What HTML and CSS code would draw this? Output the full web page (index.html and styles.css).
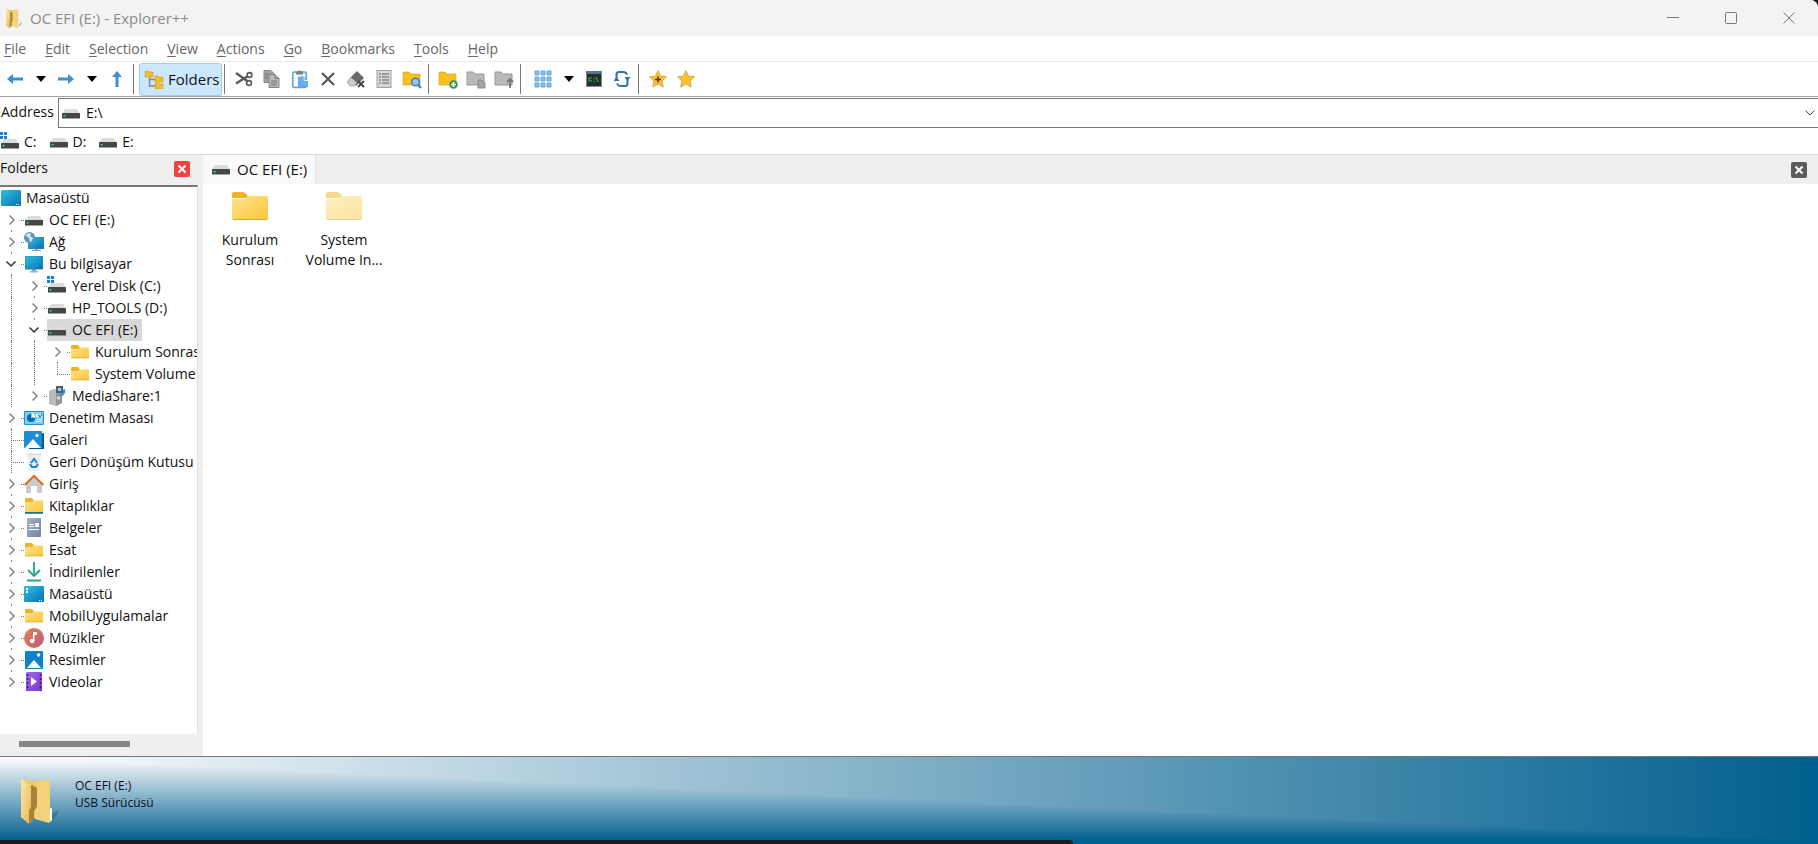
FILE: index.html
```
<!DOCTYPE html>
<html lang="tr">
<head>
<meta charset="utf-8">
<title>OC EFI (E:) - Explorer++</title>
<link rel="stylesheet" href="styles.css">
</head>
<body>
<svg class="defs" aria-hidden="true">
  <defs>
    <linearGradient id="gBlue" x1="0" y1="0" x2="1" y2="1"><stop offset="0" stop-color="#2fc0e0"/><stop offset="1" stop-color="#0672b8"/></linearGradient>
    <linearGradient id="gFolder" x1="0" y1="0" x2="1" y2="1"><stop offset="0" stop-color="#ffe38a"/><stop offset="1" stop-color="#fbc63a"/></linearGradient>
    <linearGradient id="gMusic" x1="0" y1="0" x2="1" y2="1"><stop offset="0" stop-color="#ea7f52"/><stop offset="1" stop-color="#b85a86"/></linearGradient>
    <linearGradient id="gVideo" x1="0" y1="0" x2="1" y2="1"><stop offset="0" stop-color="#a56be8"/><stop offset="1" stop-color="#7a35c8"/></linearGradient>
    <linearGradient id="gDoc" x1="0" y1="0" x2="1" y2="1"><stop offset="0" stop-color="#a3b4cc"/><stop offset="1" stop-color="#6d82a4"/></linearGradient>
    <linearGradient id="gOld" x1="0" y1="0" x2="1" y2="1"><stop offset="0" stop-color="#ffeaa8"/><stop offset="1" stop-color="#e3b754"/></linearGradient>
  </defs>
  <symbol id="drive" viewBox="0 0 20 20"><path d="M4 6h12l2.500 4h-17z" fill="#dcdcdc"/><rect x="1" y="10" width="18" height="5.500" rx=".6" fill="#434746"/><rect x="2.500" y="12" width="2" height="1.500" fill="#3fe07a"/></symbol>
  <symbol id="windrive" viewBox="0 0 20 20"><path d="M4 7h12l2.500 4h-17z" fill="#dcdcdc"/><rect x="1" y="11" width="18" height="5.500" rx=".6" fill="#434746"/><rect x="2.500" y="13" width="2" height="1.500" fill="#3fe07a"/><path d="M0 0h3v3H0zM4 0h3v3H4zM0 4h3v3H0zM4 4h3v3H4z" fill="#1583cf"/></symbol>
  <symbol id="folder" viewBox="0 0 20 20"><path d="M1 4q0-1 1-1h6l2 2.500v2H1z" fill="#eab32c"/><path d="M1 7h7l2-1.500h8q1 0 1 1V16H1z" fill="url(#gFolder)"/><path d="M1 15.500h18v.8H1z" fill="#d9a431"/></symbol>
  <symbol id="library" viewBox="0 0 20 20"><path d="M1 3q0-1 1-1h6l2 2.500v2H1z" fill="#eab32c"/><path d="M1 6h7l2-1.500h8q1 0 1 1V16H1z" fill="url(#gFolder)"/><path d="M1 16h18v1.800H1z" fill="#18768f"/></symbol>
  <symbol id="desktop" viewBox="0 0 20 20"><rect x="0" y="2" width="20" height="16" rx="1" fill="url(#gBlue)"/><path d="M15 16h1v1h-1zM17 16h1v1h-1z" fill="#fff"/></symbol>
  <symbol id="desktop2" viewBox="0 0 20 20"><rect x="0" y="2" width="20" height="16" rx="1" fill="url(#gBlue)"/><path d="M2 4h2v2H2zM2 7h2v2H2zM15 16h1v1h-1zM17 16h1v1h-1z" fill="#fff"/></symbol>
  <symbol id="pc" viewBox="0 0 20 20"><path d="M8 15h4v2H8z" fill="#8fa6b5"/><path d="M6 17h8v1.500H6z" fill="#9fb1bd"/><rect x="1" y="2" width="18" height="13.500" rx=".6" fill="#2f86ad"/><rect x="1.500" y="2.500" width="17" height="12.500" fill="url(#gBlue)"/></symbol>
  <symbol id="network" viewBox="0 0 20 20"><path d="M11 16h3v2h-3z" fill="#8fa6b5"/><path d="M8 18h9v1H8z" fill="#8199a8"/><rect x="4" y="5" width="16" height="12" fill="#2f86ad"/><rect x="4.500" y="5.500" width="15" height="11" fill="url(#gBlue)"/><circle cx="5.500" cy="5.500" r="5.500" fill="#5d97bd"/><path d="M1 3q4-3 6-1l-1 2 3 2-2 4q-2-1-2-4z" fill="#d5e8f0"/></symbol>
  <symbol id="media" viewBox="0 0 20 20"><path d="M2 5l5-2 7 1v13l-5 3-7-2z" fill="#b7b9bb"/><path d="M9 6l6-2v13l-6 3z" fill="#94979a"/><circle cx="11.500" cy="12" r="1.800" fill="#d2d4d5"/><path d="M9 0h7v7H9z" fill="#47616f"/><path d="M11 2h3v3h-3z" fill="#a8d1df"/><path d="M13 9.500q5-1 4-6" stroke="#2b8dd0" stroke-width="2" fill="none"/></symbol>
  <symbol id="control" viewBox="0 0 20 20"><rect x="0" y="3" width="20" height="14" rx="1" fill="#2792c7"/><rect x="1" y="4" width="18" height="12" fill="#7dcdf0"/><path d="M7 6a4 4 0 1 0 4 4H7z" fill="#0e67a8"/><path d="M8 5a4 4 0 0 1 3 4H8z" fill="#fff"/><path d="M12 6h3v3h-3zM16 6h2v3h-2zM13 11h5v1h-5zM12 13h5v1h-5z" fill="#e9f8ff"/><path d="M14 7l2 2 2-3" stroke="#17629a" fill="none"/></symbol>
  <symbol id="gallery" viewBox="0 0 20 20"><path d="M4 3h15q1 0 1 1v15H5z" fill="#075aa1"/><rect x="0" y="1" width="18" height="17" rx="1" fill="#198ed6"/><circle cx="13" cy="5.500" r="1.700" fill="#fff"/><path d="M1 18l8-9 8 9z" fill="#fff"/></symbol>
  <symbol id="bin" viewBox="0 0 20 20"><path d="M3 3h14l-2 16H5z" fill="#e8eff3"/><path d="M3 2l4-1 5 1 5-1v2H3z" fill="#dbe2e6"/><path d="M7 11l3-4 3 4M14 12l-2 3H8l-2-3" fill="none" stroke="#1e84d0" stroke-width="2"/></symbol>
  <symbol id="home" viewBox="0 0 20 20"><path d="M2 9l8-7 8 7v9q0 1-1 1h-4v-7H7v7H3q-1 0-1-1z" fill="#c9cbcd"/><path d="M.700 11L10 2l9.300 9" fill="none" stroke="#df6a24" stroke-width="2.200"/></symbol>
  <symbol id="docs" viewBox="0 0 20 20"><rect x="3" y="0" width="14" height="19" rx="1" fill="url(#gDoc)"/><path d="M5 6h5v1H5zM5 8h5v1H5zM11 5h4v4h-4zM5 11h10v1H5z" fill="#fff"/></symbol>
  <symbol id="download" viewBox="0 0 20 20"><path d="M10 0v14M4 8l6 6 6-6M3 18.500h14" fill="none" stroke="#1fa68b" stroke-width="1.800"/></symbol>
  <symbol id="music" viewBox="0 0 20 20"><circle cx="10" cy="10" r="10" fill="url(#gMusic)"/><circle cx="8" cy="13" r="2.300" fill="#fff"/><path d="M9 4h4v3h-2.500v6H9z" fill="#fff"/></symbol>
  <symbol id="pictures" viewBox="0 0 20 20"><rect x="1" y="1" width="18" height="18" rx="1" fill="#1180cf"/><circle cx="14.500" cy="5" r="1.700" fill="#fff"/><path d="M3 18l7-8 7 8z" fill="#fff"/></symbol>
  <symbol id="video" viewBox="0 0 20 20"><rect x="2" y="0" width="16" height="19" rx="1" fill="url(#gVideo)"/><path d="M3.500 2v17M16.500 2v17" stroke="#3e1b7d" stroke-width="1.500" stroke-dasharray="2 2"/><path d="M7 5l6 4.500L7 14z" fill="#fff"/></symbol>
  <symbol id="oldfolder" viewBox="0 0 40 50"><path d="M31 38l8-4-3 7-8 5z" fill="#1c4e68" opacity=".35"/><path d="M1 3l10 2 19-1v42l-16-4-4 5-9-6z" fill="#eecb72"/><path d="M12 9l5 3v19l-3 4v8l-5 4V12z" fill="#a98235"/><path d="M1 2l10 9v20l-2 4v13l-8-7z" fill="url(#gOld)"/><path d="M17 6l13-2v27l2 2v11l-3 3-14-4v-9l2-3z" fill="#f3d27c"/><path d="M30 32l2 1v11l-2 1z" fill="#f8fbf7"/></symbol>
  <symbol id="x" viewBox="0 0 16 16"><path d="M4.500 4.500l7 7M11.500 4.500l-7 7" stroke="currentColor" stroke-width="2"/></symbol>
  <symbol id="right" viewBox="0 0 12 12"><path d="M4.500 1.500L9 6l-4.500 4.500" fill="none" stroke="#858585" stroke-width="1.500"/></symbol>
  <symbol id="down" viewBox="0 0 12 12"><path d="M1.500 3.500L6 8l4.500-4.500" fill="none" stroke="#333" stroke-width="1.500"/></symbol>
  <symbol id="arrow" viewBox="0 0 20 20"><path d="M2 10l6-5v3.500h10v3H8V15z" fill="#3a8fcc"/></symbol>
  <symbol id="caret" viewBox="0 0 10 6"><path d="M0 0h10L5 6z" fill="#000"/></symbol>
</svg>

<div class="window">
  <header class="titlebar">
    <svg class="app-icon"><use href="#oldfolder"/></svg>
    <h1 class="title">OC EFI (E:) - Explorer++</h1>
    <div class="window-buttons">
      <button class="window-button" aria-label="Minimize"><svg class="i12" viewBox="0 0 12 12"><path d="M0 5.500h12" stroke="#777"/></svg></button>
      <button class="window-button" aria-label="Maximize"><svg class="i12" viewBox="0 0 12 12"><rect x=".5" y=".5" width="11" height="11" rx="1" fill="none" stroke="#777"/></svg></button>
      <button class="window-button" aria-label="Close"><svg class="i12" viewBox="0 0 12 12"><path d="M.5.500l11 11M11.500.500l-11 11" stroke="#777"/></svg></button>
    </div>
  </header>

  <nav class="menubar" aria-label="Menu">
    <button class="menu"><u>F</u>ile</button>
    <button class="menu"><u>E</u>dit</button>
    <button class="menu"><u>S</u>election</button>
    <button class="menu"><u>V</u>iew</button>
    <button class="menu"><u>A</u>ctions</button>
    <button class="menu"><u>G</u>o</button>
    <button class="menu"><u>B</u>ookmarks</button>
    <button class="menu"><u>T</u>ools</button>
    <button class="menu"><u>H</u>elp</button>
  </nav>

  <div class="toolbar">
    <button class="tool" aria-label="Back"><svg class="i20"><use href="#arrow"/></svg></button>
    <button class="tool-caret" aria-label="Back history"><svg class="caret"><use href="#caret"/></svg></button>
    <button class="tool" aria-label="Forward"><svg class="i20 flip"><use href="#arrow"/></svg></button>
    <button class="tool-caret" aria-label="Forward history"><svg class="caret"><use href="#caret"/></svg></button>
    <button class="tool" aria-label="Up"><svg class="i20 upward"><use href="#arrow"/></svg></button>
    <span class="separator"></span>
    <button class="tool-folders" aria-pressed="true">
      <svg class="i20" viewBox="0 0 20 20"><path d="M5.500 7v10H12M5.500 10.500H12" fill="none" stroke="#7b8b96" stroke-width="1.500"/><path d="M1 2h3l1 1h4v5H1zM11 7h3l1 1h4v5h-8zM11 14h3l1 1h4v5h-8z" fill="#f5bd2b" stroke="#cf9a27" stroke-width=".6"/></svg>
      Folders
    </button>
    <span class="separator"></span>
    <button class="tool" aria-label="Cut"><svg class="i20" viewBox="0 0 20 20"><path d="M2 4l12 8.500M2 14.500L14 7" stroke="#5a5a5a" stroke-width="2.400"/><circle cx="15.500" cy="6" r="2.400" fill="none" stroke="#5a5a5a" stroke-width="1.600"/><circle cx="15" cy="14" r="2.400" fill="none" stroke="#5a5a5a" stroke-width="1.600"/></svg></button>
    <button class="tool" aria-label="Copy"><svg class="i20" viewBox="0 0 20 20"><path d="M2 1.500h7l3 3v9H2z" fill="#a2a2a2" stroke="#858585"/><path d="M7 5.500h6l4 4v9H7z" fill="#bababa" stroke="#858585"/><path d="M13 5.500v4h4M9 12h6M9 14h6M9 16h6M3.500 5H6M3.500 7H6M3.500 9H6" fill="none" stroke="#777"/></svg></button>
    <button class="tool" aria-label="Paste"><svg class="i20" viewBox="0 0 20 20"><rect x="2.800" y="3" width="13.500" height="15.500" rx="1.500" fill="#f4f8fb" stroke="#5aa0d4" stroke-width="1.500"/><path d="M6 2.500h2q1.500-2.500 3 0h2v3H6z" fill="#808080"/><path d="M8 7.500h6l4 4V18H8z" fill="#64aef0"/><path d="M14 7.500v4h4" fill="none" stroke="#d9eeff"/></svg></button>
    <button class="tool" aria-label="Delete"><svg class="i20" viewBox="0 0 20 20"><path d="M4 4l12 12M16 4L4 16" stroke="#585858" stroke-width="2.200"/></svg></button>
    <button class="tool" aria-label="Delete permanently"><svg class="i20" viewBox="0 0 20 20"><path d="M11 2l7 7-8 8-6-8z" fill="#6a6a6a"/><path d="M5 8l6 6-3 3H4l-3-4z" fill="#c9c9c9" stroke="#888" stroke-width=".6"/><path d="M12 12l6 6M18 12l-6 6" stroke="#484848" stroke-width="2"/></svg></button>
    <button class="tool" aria-label="Properties"><svg class="i20" viewBox="0 0 20 20"><rect x="3" y="1.500" width="14" height="17" fill="#d6d6d6" stroke="#a0a0a0"/><path d="M5 5h2M5 8h2M5 11h2M5 14h2M8 5h7M8 8h7M8 11h7M8 14h7" stroke="#888" stroke-width="1.400"/></svg></button>
    <button class="tool" aria-label="Search"><svg class="i20" viewBox="0 0 20 20"><path d="M1 3h6l2 2h9v11H1z" fill="#f9c120" stroke="#d29b27" stroke-width=".6"/><circle cx="13.500" cy="13" r="3.800" fill="#8dcaf2" stroke="#377db6" stroke-width="1.400"/><path d="M16 15.500l3 3.500" stroke="#377db6" stroke-width="2"/></svg></button>
    <span class="separator"></span>
    <button class="tool" aria-label="New folder"><svg class="i20" viewBox="0 0 20 20"><path d="M1 3h6l2 2h9v11H1z" fill="#f9c120" stroke="#d29b27" stroke-width=".6"/><circle cx="15.500" cy="15.500" r="4.300" fill="#36984a"/><path d="M15.500 13v5M13 15.500h5" stroke="#fff" stroke-width="1.500"/></svg></button>
    <button class="tool" aria-label="Copy to folder"><svg class="i20" viewBox="0 0 20 20"><path d="M1 3h6l2 2h9v11H1z" fill="#bababa" stroke="#979797"/><path d="M12 11h3l4 3v5h-7z" fill="#a5a5a5" stroke="#898989"/></svg></button>
    <button class="tool" aria-label="Move to folder"><svg class="i20" viewBox="0 0 20 20"><path d="M1 3h6l2 2h9v11H1z" fill="#bababa" stroke="#979797"/><path d="M16 19v-8M13 13l3-3 3 3" fill="none" stroke="#7a7a7a" stroke-width="1.800"/></svg></button>
    <span class="separator"></span>
    <button class="tool views" aria-label="Views"><svg class="i20" viewBox="0 0 20 20"><path d="M2 2h4v4H2zM8 2h4v4H8zM14 2h4v4h-4zM2 8h4v4H2zM8 8h4v4H8zM14 8h4v4h-4zM2 14h4v4H2zM8 14h4v4H8zM14 14h4v4h-4z" fill="#7fbfeb" stroke="#6aa9d8"/></svg></button>
    <button class="tool-caret" aria-label="Choose view"><svg class="caret"><use href="#caret"/></svg></button>
    <button class="tool" aria-label="Command prompt"><svg class="i20" viewBox="0 0 20 20"><rect x="2.500" y="2.500" width="15" height="15" fill="#252c29" stroke="#7e8f9c"/><path d="M2 2h16v3H2z" fill="#5b7490"/><path d="M8 9H5v3h3M10 9v1M10 12v1M12 8l2 5" fill="none" stroke="#35b53c" stroke-width="1.200"/></svg></button>
    <button class="tool" aria-label="Refresh"><svg class="i20" viewBox="0 0 20 20"><path d="M4.500 10V5.500Q4.500 3 7 3h4q3 0 4 2.500M15.500 10v4.500q0 2.500-2.500 2.500H9q-3 0-4-2.500" fill="none" stroke="#2d6fb4" stroke-width="2"/><path d="M1.500 12h6l-3-4zM12.500 8h6l-3 4z" transform="translate(0 0)" fill="#2d6fb4"/></svg></button>
    <span class="separator"></span>
    <button class="tool" aria-label="Add bookmark"><svg class="i20" viewBox="0 0 20 20"><path d="M10 1.500l2.500 5.700 6 .6-4.500 4.200 1.300 6L10 15l-5.300 3 1.300-6-4.500-4.200 6-.6z" fill="#fbc12a" stroke="#dfa94a"/><path d="M10 7.500v6M7 10.500h6" stroke="#5c3a20" stroke-width="1.600"/></svg></button>
    <button class="tool" aria-label="Bookmarks"><svg class="i20" viewBox="0 0 20 20"><path d="M10 1.500l2.500 5.700 6 .6-4.500 4.200 1.300 6L10 15l-5.300 3 1.300-6-4.500-4.200 6-.6z" fill="#fbc12a" stroke="#dfa94a"/></svg></button>
  </div>

  <div class="address">
    <label class="address-label" for="address">Address</label>
    <div class="address-box">
      <svg class="i20"><use href="#drive"/></svg>
      <input class="address-input" id="address" type="text" value="E:\">
      <button class="address-drop" aria-label="Show addresses"><svg class="i12" viewBox="0 0 12 12"><path d="M1.500 3.500L6 8l4.500-4.500" fill="none" stroke="#444"/></svg></button>
    </div>
  </div>

  <div class="drives">
    <button class="drive"><svg class="i20"><use href="#windrive"/></svg>C:</button>
    <button class="drive"><svg class="i20"><use href="#drive"/></svg>D:</button>
    <button class="drive"><svg class="i20"><use href="#drive"/></svg>E:</button>
  </div>

  <main class="content">
    <aside class="folders">
      <div class="folders-head">
        <h2 class="folders-title">Folders</h2>
        <button class="close red" aria-label="Close folders"><svg class="i16"><use href="#x"/></svg></button>
      </div>
      <ul class="tree">
        <li class="row"><svg class="i20"><use href="#desktop"/></svg><span class="name">Masaüstü</span></li>
        <li class="row"><span class="node"><svg class="i12"><use href="#right"/></svg></span><svg class="i20"><use href="#drive"/></svg><span class="name">OC EFI (E:)</span></li>
        <li class="row"><span class="node"><svg class="i12"><use href="#right"/></svg></span><svg class="i20"><use href="#network"/></svg><span class="name">Ağ</span></li>
        <li class="row"><span class="node"><svg class="i12"><use href="#down"/></svg></span><svg class="i20"><use href="#pc"/></svg><span class="name">Bu bilgisayar</span></li>
        <li class="row"><span class="line"></span><span class="node"><svg class="i12"><use href="#right"/></svg></span><svg class="i20"><use href="#windrive"/></svg><span class="name">Yerel Disk (C:)</span></li>
        <li class="row"><span class="line"></span><span class="node"><svg class="i12"><use href="#right"/></svg></span><svg class="i20"><use href="#drive"/></svg><span class="name">HP_TOOLS (D:)</span></li>
        <li class="row"><span class="line"></span><span class="node"><svg class="i12"><use href="#down"/></svg></span><span class="selected"><svg class="i20"><use href="#drive"/></svg><span class="name">OC EFI (E:)</span></span></li>
        <li class="row"><span class="line"></span><span class="line"></span><span class="node"><svg class="i12"><use href="#right"/></svg></span><svg class="i20"><use href="#folder"/></svg><span class="name">Kurulum Sonras</span></li>
        <li class="row"><span class="line"></span><span class="line"></span><span class="leaf last"></span><svg class="i20"><use href="#folder"/></svg><span class="name">System Volume</span></li>
        <li class="row"><span class="line"></span><span class="node end"><svg class="i12"><use href="#right"/></svg></span><svg class="i20"><use href="#media"/></svg><span class="name">MediaShare:1</span></li>
        <li class="row"><span class="node"><svg class="i12"><use href="#right"/></svg></span><svg class="i20"><use href="#control"/></svg><span class="name">Denetim Masası</span></li>
        <li class="row"><span class="leaf"></span><svg class="i20"><use href="#gallery"/></svg><span class="name">Galeri</span></li>
        <li class="row"><span class="leaf"></span><svg class="i20"><use href="#bin"/></svg><span class="name">Geri Dönüşüm Kutusu</span></li>
        <li class="row"><span class="node"><svg class="i12"><use href="#right"/></svg></span><svg class="i20"><use href="#home"/></svg><span class="name">Giriş</span></li>
        <li class="row"><span class="node"><svg class="i12"><use href="#right"/></svg></span><svg class="i20"><use href="#library"/></svg><span class="name">Kitaplıklar</span></li>
        <li class="row"><span class="node"><svg class="i12"><use href="#right"/></svg></span><svg class="i20"><use href="#docs"/></svg><span class="name">Belgeler</span></li>
        <li class="row"><span class="node"><svg class="i12"><use href="#right"/></svg></span><svg class="i20"><use href="#folder"/></svg><span class="name">Esat</span></li>
        <li class="row"><span class="node"><svg class="i12"><use href="#right"/></svg></span><svg class="i20"><use href="#download"/></svg><span class="name">İndirilenler</span></li>
        <li class="row"><span class="node"><svg class="i12"><use href="#right"/></svg></span><svg class="i20"><use href="#desktop2"/></svg><span class="name">Masaüstü</span></li>
        <li class="row"><span class="node"><svg class="i12"><use href="#right"/></svg></span><svg class="i20"><use href="#folder"/></svg><span class="name">MobilUygulamalar</span></li>
        <li class="row"><span class="node"><svg class="i12"><use href="#right"/></svg></span><svg class="i20"><use href="#music"/></svg><span class="name">Müzikler</span></li>
        <li class="row"><span class="node"><svg class="i12"><use href="#right"/></svg></span><svg class="i20"><use href="#pictures"/></svg><span class="name">Resimler</span></li>
        <li class="row"><span class="node end"><svg class="i12"><use href="#right"/></svg></span><svg class="i20"><use href="#video"/></svg><span class="name">Videolar</span></li>
      </ul>
      <div class="scrollbar"><div class="thumb"></div></div>
    </aside>

    <section class="files">
      <div class="tabs">
        <button class="tab"><svg class="i20"><use href="#drive"/></svg>OC EFI (E:)</button>
        <button class="close gray" aria-label="Close tab"><svg class="i16"><use href="#x"/></svg></button>
      </div>
      <div class="grid">
        <figure class="file"><svg class="file-icon" viewBox="0 0 36 28"><path d="M0 2q0-2 2-2h9q2 0 4 3l2 3H0z" fill="#f0b41e"/><path d="M0 7h12q2 0 4-3h18q2 0 2 2v20q0 2-2 2H2q-2 0-2-2z" fill="url(#gFolder)"/><path d="M1 27.500h34" stroke="#d9a431"/></svg><figcaption class="caption">Kurulum Sonrası</figcaption></figure>
        <figure class="file"><svg class="file-icon hidden-item" viewBox="0 0 36 28"><path d="M0 2q0-2 2-2h9q2 0 4 3l2 3H0z" fill="#f0b41e"/><path d="M0 7h12q2 0 4-3h18q2 0 2 2v20q0 2-2 2H2q-2 0-2-2z" fill="url(#gFolder)"/><path d="M1 27.500h34" stroke="#d9a431"/></svg><figcaption class="caption">System Volume In...</figcaption></figure>
      </div>
    </section>
  </main>

  <footer class="details">
    <svg class="details-icon"><use href="#oldfolder"/></svg>
    <div class="details-text">
      <p class="detail">OC EFI (E:)</p>
      <p class="detail">USB Sürücüsü</p>
    </div>
    <div class="edge"></div>
  </footer>
</div>
</body>
</html>
```
FILE: styles.css
```
* { box-sizing: border-box; }
body, h1, h2, ul, p, figure { margin: 0; padding: 0; }
body { background: #1b1b22; color: #111; font: 14px/20px "Open Sans", "Noto Sans", sans-serif; }
h1, h2 { font-size: 14px; font-weight: 400; }
button, input { margin: 0; padding: 0; border: 0; background: none; color: inherit; font: inherit; }
svg { display: block; flex: none; }
.defs { position: absolute; width: 0; height: 0; }
.i12 { width: 12px; height: 12px; }
.i16 { width: 16px; height: 16px; }
.i20 { width: 20px; height: 20px; }
.caret { width: 10px; height: 6px; }
.flip { transform: scaleX(-1); }
.upward { transform: rotate(90deg); }

.window { display: flex; flex-direction: column; height: 100vh; min-height: 600px; overflow: hidden; border-top-right-radius: 8px; background: #fff; }

.titlebar { display: flex; align-items: center; height: 36px; padding-left: 5px; background: #f3f3f3; color: #8b8b8b; }
.app-icon { width: 18px; height: 21px; }
.title { margin-left: 7px; font-size: 15px; }
.window-buttons { display: flex; margin-left: auto; }
.window-button { display: flex; align-items: center; justify-content: center; width: 58px; height: 36px; }

.menubar { display: flex; align-items: center; gap: 19px; height: 26px; padding: 0 4px; border-bottom: 1px solid #eaeaea; color: #666; }
.menu u { text-underline-offset: 2px; }

.toolbar { display: flex; align-items: center; height: 35px; padding-left: 1px; border-bottom: 1px solid #a3a3a3; }
.tool { display: flex; align-items: center; justify-content: center; width: 28px; height: 32px; }
.tool-caret { display: flex; align-items: center; justify-content: center; width: 23px; height: 32px; }
.separator { width: 1px; height: 30px; margin: 0 5px 0 2px; background: #777; }
.tool.views { margin-left: 3px; }
.tool-folders { display: flex; align-items: center; gap: 4px; width: 83px; height: 33px; padding: 0 4px; border: 1px solid #9fcdf3; border-radius: 3px; background: #cce8ff; font-size: 15px; white-space: nowrap; }

.address { display: flex; align-items: stretch; height: 31px; padding-top: 1px; }
.address-label { display: flex; align-items: center; width: 58px; padding: 0 0 2px 1px; }
.address-box { display: flex; flex: 1; align-items: center; gap: 5px; padding: 0 2px; border: 1px solid #777; border-right: 0; }
.address-input { flex: 1; min-width: 0; outline: 0; }
.address-drop { padding: 4px 0; }

.drives { display: flex; align-items: center; gap: 12px; height: 27px; padding-top: 2px; border-bottom: 1px solid #d9d9d9; }
.drive { display: flex; align-items: center; gap: 4px; }

.content { display: flex; flex: 1; min-height: 0; background: #efefef; }
.folders { display: flex; flex-direction: column; width: 198px; }
.folders-head { display: flex; align-items: flex-start; justify-content: space-between; height: 30px; padding: 3px 8px 0 0; }
.close { border-radius: 2px; }
.close.red { margin-top: 3px; background: #e8453f; color: #fff; }
.close.gray { margin: 0 11px 0 auto; background: #5c5c5c; color: #fff; }
.tree { flex: 1; min-height: 0; overflow: hidden; border-top: 2px solid #777; border-right: 1px solid #e0e0e0; background: #fff; list-style: none; }
.row { display: flex; align-items: center; height: 22px; padding-left: 1px; white-space: nowrap; }
.name { padding-left: 5px; }
.node, .line, .leaf { position: relative; flex: none; width: 23px; height: 22px; }
.node { display: flex; align-items: center; padding-left: 4px; }
.node::before { content: ""; position: absolute; left: 10px; bottom: -1px; width: 1px; height: 2px; background: #888; }
.node.end::before { display: none; }
.node::after { content: ""; position: absolute; left: 20px; top: 11px; width: 3px; border-top: 1px dotted #777; }
.line::before, .leaf::before { content: ""; position: absolute; left: 10px; top: 0; height: 22px; border-left: 1px dotted #777; }
.leaf::after { content: ""; position: absolute; left: 10px; right: 0; top: 11px; border-top: 1px dotted #777; }
.leaf.last::before { height: 11px; }
.selected { display: flex; align-items: center; height: 22px; padding-right: 4px; background: #d9d9d9; }
.scrollbar { height: 22px; padding: 7px 0 0 19px; }
.thumb { width: 111px; height: 6px; background: #858585; }

.files { display: flex; flex: 1; flex-direction: column; min-width: 0; margin-left: 5px; background: #fff; }
.tabs { display: flex; align-items: center; height: 29px; background: #efefef; }
.tab { display: flex; align-items: center; gap: 6px; height: 29px; padding: 0 8px 1px; border-right: 1px solid #e2e2e2; background: #fafafa; font-size: 15px; }
.grid { display: flex; gap: 6px; padding: 8px 3px; }
.file { display: flex; flex-direction: column; align-items: center; gap: 10px; width: 88px; }
.file-icon { width: 36px; height: 28px; }
.hidden-item { opacity: .5; }
.caption { width: 80px; text-align: center; }

.details { position: relative; display: flex; align-items: flex-start; gap: 15px; height: 88px; padding: 19px 20px 0; border-top: 1px solid #777; background: linear-gradient(to right, #fff, #005f8e), linear-gradient(to bottom, #fff, #005f8e 96%); background-blend-mode: darken; }
.details-icon { width: 40px; height: 50px; }
.details-text { padding-top: 1px; color: #06101c; font-size: 12px; line-height: 17px; }
.edge { position: absolute; left: 0; bottom: 0; width: 59%; height: 4px; border-top-right-radius: 4px; background: #1b1b22; }
```
